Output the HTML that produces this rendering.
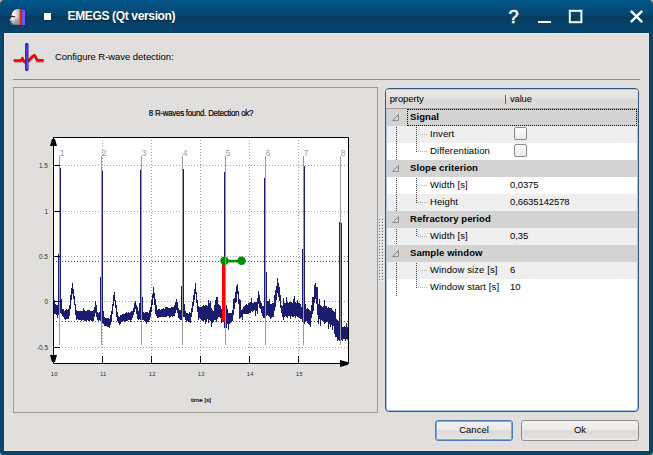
<!DOCTYPE html>
<html><head><meta charset="utf-8"><style>
*{margin:0;padding:0;box-sizing:border-box}
html,body{width:653px;height:455px;overflow:hidden;background:#aea89c;font-family:"Liberation Sans", sans-serif}
.abs{position:absolute}
#frame{position:absolute;left:0;top:0;width:653px;height:455px;background:#06466d;border-radius:5px 5px 4px 4px}
#title{position:absolute;left:0;top:0;width:653px;height:33px;border-radius:5px 5px 0 0;
 background:linear-gradient(to bottom,#02568a 0px,#034d7d 8px,#054670 15px,#053c5f 16.5px,#05406a 24px,#05446d 33px)}
#content{position:absolute;left:4px;top:33px;width:645px;height:418px;background:#e0dfde;border:1px solid #ebe7e3;box-shadow:0 0 0 1px #063d60}
.t{position:absolute;white-space:nowrap;font-family:"Liberation Sans", sans-serif;line-height:13px}
.btn{position:absolute;border-radius:3px;background:linear-gradient(to bottom,#f5f4f3 0%,#ebeae9 45%,#dcdbda 55%,#e4e3e2 90%,#f2f1f0 100%);font-size:9.5px;text-align:center;line-height:19px;color:#000}
</style></head><body>
<div id="frame"></div>
<div id="title"></div>
<div id="content"></div>
<div class="t" style="left:67.5px;top:10px;font-size:12px;font-weight:bold;color:#fff;letter-spacing:-0.35px;text-shadow:0 1px 1px #02243a">EMEGS (Qt version)</div>
<div class="t" style="left:55px;top:50px;font-size:9.5px;color:#000;letter-spacing:-0.05px">Configure R-wave detection:</div>
<div class="abs" style="left:13px;top:79px;width:627px;height:1px;background:#8c8b8a"></div>
<div class="abs" style="left:13px;top:87px;width:365px;height:326px;border:1px solid #9c9b9a"></div>
<div class="abs" style="left:385px;top:88px;width:254px;height:324px;border:1px solid #35577f;border-radius:4px;background:#fff;box-shadow:inset 1px 1px 0 #aac4e6, inset -1px -1px 0 #aac4e6"></div>
<div class="abs" style="left:386px;top:90px;width:252px;height:19px;background:linear-gradient(to bottom,#e9e8e7 0px,#e4e3e2 8px,#d9d8d7 9.5px,#dcdbda 17px,#e2e1e0 18px);border-bottom:1px solid #9e9d9c"></div>
<div class="t" style="left:389.7px;top:92px;font-size:9.5px;color:#000;letter-spacing:-0.1px">property</div>
<div class="abs" style="left:505px;top:95px;width:1px;height:9px;background:#606060"></div>
<div class="t" style="left:510px;top:92px;font-size:9.5px;color:#000;letter-spacing:-0.2px">value</div>
<div class="abs" style="left:387px;top:109px;width:250px;height:17px;background:#d3d3d3"></div>
<div class="t" style="left:410px;top:109.5px;font-size:9.5px;font-weight:bold;color:#000;letter-spacing:0.1px">Signal</div>
<div class="abs" style="left:387px;top:126px;width:250px;height:17px;background:#efefef"></div>
<div class="t" style="left:430px;top:126.5px;font-size:9.5px;color:#000;letter-spacing:0.1px">Invert</div>
<div class="abs" style="left:514px;top:127px;width:13px;height:13px;border:1px solid #8a8a8a;border-radius:2px;background:linear-gradient(#fdfdfd,#eaeaea)"></div>
<div class="abs" style="left:387px;top:143px;width:250px;height:17px;background:#ffffff"></div>
<div class="t" style="left:430px;top:143.5px;font-size:9.5px;color:#000;letter-spacing:0.1px">Differentiation</div>
<div class="abs" style="left:514px;top:144px;width:13px;height:13px;border:1px solid #8a8a8a;border-radius:2px;background:linear-gradient(#fdfdfd,#eaeaea)"></div>
<div class="abs" style="left:387px;top:160px;width:250px;height:17px;background:#d3d3d3"></div>
<div class="t" style="left:410px;top:160.5px;font-size:9.5px;font-weight:bold;color:#000;letter-spacing:0.1px">Slope criterion</div>
<div class="abs" style="left:387px;top:177px;width:250px;height:17px;background:#ffffff"></div>
<div class="t" style="left:430px;top:177.5px;font-size:9.5px;color:#000;letter-spacing:0.1px">Width [s]</div>
<div class="t" style="left:510px;top:177.5px;font-size:9.5px;color:#000;letter-spacing:-0.1px">0,0375</div>
<div class="abs" style="left:387px;top:194px;width:250px;height:17px;background:#efefef"></div>
<div class="t" style="left:430px;top:194.5px;font-size:9.5px;color:#000;letter-spacing:0.1px">Height</div>
<div class="t" style="left:510px;top:194.5px;font-size:9.5px;color:#000;letter-spacing:-0.1px">0,6635142578</div>
<div class="abs" style="left:387px;top:211px;width:250px;height:17px;background:#d3d3d3"></div>
<div class="t" style="left:410px;top:211.5px;font-size:9.5px;font-weight:bold;color:#000;letter-spacing:0.1px">Refractory period</div>
<div class="abs" style="left:387px;top:228px;width:250px;height:17px;background:#efefef"></div>
<div class="t" style="left:430px;top:228.5px;font-size:9.5px;color:#000;letter-spacing:0.1px">Width [s]</div>
<div class="t" style="left:510px;top:228.5px;font-size:9.5px;color:#000;letter-spacing:-0.1px">0,35</div>
<div class="abs" style="left:387px;top:245px;width:250px;height:17px;background:#d3d3d3"></div>
<div class="t" style="left:410px;top:245.5px;font-size:9.5px;font-weight:bold;color:#000;letter-spacing:0.1px">Sample window</div>
<div class="abs" style="left:387px;top:262px;width:250px;height:17px;background:#efefef"></div>
<div class="t" style="left:430px;top:262.5px;font-size:9.5px;color:#000;letter-spacing:0.1px">Window size [s]</div>
<div class="t" style="left:510px;top:262.5px;font-size:9.5px;color:#000;letter-spacing:-0.1px">6</div>
<div class="abs" style="left:387px;top:279px;width:250px;height:17px;background:#ffffff"></div>
<div class="t" style="left:430px;top:279.5px;font-size:9.5px;color:#000;letter-spacing:0.1px">Window start [s]</div>
<div class="t" style="left:510px;top:279.5px;font-size:9.5px;color:#000;letter-spacing:-0.1px">10</div>
<div class="btn" style="left:435px;top:420px;width:78px;height:21px;border:1px solid #4f7cb6;box-shadow:inset 0 0 0 1px #7ea8dc;line-height:17.5px">Cancel</div>
<div class="btn" style="left:521px;top:420px;width:118px;height:21px;border:1px solid #8e8d8c;line-height:17px">Ok</div>
<svg class="abs" style="left:0;top:0" width="653" height="455" viewBox="0 0 653 455">
<rect x="53" y="137" width="296" height="227" fill="#fff"/>
<path d="M62 165.5h1M65 165.5h1M68 165.5h1M71 165.5h1M74 165.5h1M77 165.5h1M80 165.5h1M83 165.5h1M86 165.5h1M89 165.5h1M92 165.5h1M95 165.5h1M98 165.5h1M101 165.5h1M104 165.5h1M107 165.5h1M110 165.5h1M113 165.5h1M116 165.5h1M119 165.5h1M122 165.5h1M125 165.5h1M128 165.5h1M131 165.5h1M134 165.5h1M137 165.5h1M140 165.5h1M143 165.5h1M146 165.5h1M149 165.5h1M152 165.5h1M155 165.5h1M158 165.5h1M161 165.5h1M164 165.5h1M167 165.5h1M170 165.5h1M173 165.5h1M176 165.5h1M179 165.5h1M182 165.5h1M185 165.5h1M188 165.5h1M191 165.5h1M194 165.5h1M197 165.5h1M200 165.5h1M203 165.5h1M206 165.5h1M209 165.5h1M212 165.5h1M215 165.5h1M218 165.5h1M221 165.5h1M224 165.5h1M227 165.5h1M230 165.5h1M233 165.5h1M236 165.5h1M239 165.5h1M242 165.5h1M245 165.5h1M248 165.5h1M251 165.5h1M254 165.5h1M257 165.5h1M260 165.5h1M263 165.5h1M266 165.5h1M269 165.5h1M272 165.5h1M275 165.5h1M278 165.5h1M281 165.5h1M284 165.5h1M287 165.5h1M290 165.5h1M293 165.5h1M296 165.5h1M299 165.5h1M302 165.5h1M305 165.5h1M308 165.5h1M311 165.5h1M314 165.5h1M317 165.5h1M320 165.5h1M323 165.5h1M326 165.5h1M329 165.5h1M332 165.5h1M335 165.5h1M338 165.5h1M341 165.5h1M344 165.5h1M347 165.5h1M62 211.5h1M65 211.5h1M68 211.5h1M71 211.5h1M74 211.5h1M77 211.5h1M80 211.5h1M83 211.5h1M86 211.5h1M89 211.5h1M92 211.5h1M95 211.5h1M98 211.5h1M101 211.5h1M104 211.5h1M107 211.5h1M110 211.5h1M113 211.5h1M116 211.5h1M119 211.5h1M122 211.5h1M125 211.5h1M128 211.5h1M131 211.5h1M134 211.5h1M137 211.5h1M140 211.5h1M143 211.5h1M146 211.5h1M149 211.5h1M152 211.5h1M155 211.5h1M158 211.5h1M161 211.5h1M164 211.5h1M167 211.5h1M170 211.5h1M173 211.5h1M176 211.5h1M179 211.5h1M182 211.5h1M185 211.5h1M188 211.5h1M191 211.5h1M194 211.5h1M197 211.5h1M200 211.5h1M203 211.5h1M206 211.5h1M209 211.5h1M212 211.5h1M215 211.5h1M218 211.5h1M221 211.5h1M224 211.5h1M227 211.5h1M230 211.5h1M233 211.5h1M236 211.5h1M239 211.5h1M242 211.5h1M245 211.5h1M248 211.5h1M251 211.5h1M254 211.5h1M257 211.5h1M260 211.5h1M263 211.5h1M266 211.5h1M269 211.5h1M272 211.5h1M275 211.5h1M278 211.5h1M281 211.5h1M284 211.5h1M287 211.5h1M290 211.5h1M293 211.5h1M296 211.5h1M299 211.5h1M302 211.5h1M305 211.5h1M308 211.5h1M311 211.5h1M314 211.5h1M317 211.5h1M320 211.5h1M323 211.5h1M326 211.5h1M329 211.5h1M332 211.5h1M335 211.5h1M338 211.5h1M341 211.5h1M344 211.5h1M347 211.5h1M62 256.5h1M65 256.5h1M68 256.5h1M71 256.5h1M74 256.5h1M77 256.5h1M80 256.5h1M83 256.5h1M86 256.5h1M89 256.5h1M92 256.5h1M95 256.5h1M98 256.5h1M101 256.5h1M104 256.5h1M107 256.5h1M110 256.5h1M113 256.5h1M116 256.5h1M119 256.5h1M122 256.5h1M125 256.5h1M128 256.5h1M131 256.5h1M134 256.5h1M137 256.5h1M140 256.5h1M143 256.5h1M146 256.5h1M149 256.5h1M152 256.5h1M155 256.5h1M158 256.5h1M161 256.5h1M164 256.5h1M167 256.5h1M170 256.5h1M173 256.5h1M176 256.5h1M179 256.5h1M182 256.5h1M185 256.5h1M188 256.5h1M191 256.5h1M194 256.5h1M197 256.5h1M200 256.5h1M203 256.5h1M206 256.5h1M209 256.5h1M212 256.5h1M215 256.5h1M218 256.5h1M221 256.5h1M224 256.5h1M227 256.5h1M230 256.5h1M233 256.5h1M236 256.5h1M239 256.5h1M242 256.5h1M245 256.5h1M248 256.5h1M251 256.5h1M254 256.5h1M257 256.5h1M260 256.5h1M263 256.5h1M266 256.5h1M269 256.5h1M272 256.5h1M275 256.5h1M278 256.5h1M281 256.5h1M284 256.5h1M287 256.5h1M290 256.5h1M293 256.5h1M296 256.5h1M299 256.5h1M302 256.5h1M305 256.5h1M308 256.5h1M311 256.5h1M314 256.5h1M317 256.5h1M320 256.5h1M323 256.5h1M326 256.5h1M329 256.5h1M332 256.5h1M335 256.5h1M338 256.5h1M341 256.5h1M344 256.5h1M347 256.5h1M62 301.5h1M65 301.5h1M68 301.5h1M71 301.5h1M74 301.5h1M77 301.5h1M80 301.5h1M83 301.5h1M86 301.5h1M89 301.5h1M92 301.5h1M95 301.5h1M98 301.5h1M101 301.5h1M104 301.5h1M107 301.5h1M110 301.5h1M113 301.5h1M116 301.5h1M119 301.5h1M122 301.5h1M125 301.5h1M128 301.5h1M131 301.5h1M134 301.5h1M137 301.5h1M140 301.5h1M143 301.5h1M146 301.5h1M149 301.5h1M152 301.5h1M155 301.5h1M158 301.5h1M161 301.5h1M164 301.5h1M167 301.5h1M170 301.5h1M173 301.5h1M176 301.5h1M179 301.5h1M182 301.5h1M185 301.5h1M188 301.5h1M191 301.5h1M194 301.5h1M197 301.5h1M200 301.5h1M203 301.5h1M206 301.5h1M209 301.5h1M212 301.5h1M215 301.5h1M218 301.5h1M221 301.5h1M224 301.5h1M227 301.5h1M230 301.5h1M233 301.5h1M236 301.5h1M239 301.5h1M242 301.5h1M245 301.5h1M248 301.5h1M251 301.5h1M254 301.5h1M257 301.5h1M260 301.5h1M263 301.5h1M266 301.5h1M269 301.5h1M272 301.5h1M275 301.5h1M278 301.5h1M281 301.5h1M284 301.5h1M287 301.5h1M290 301.5h1M293 301.5h1M296 301.5h1M299 301.5h1M302 301.5h1M305 301.5h1M308 301.5h1M311 301.5h1M314 301.5h1M317 301.5h1M320 301.5h1M323 301.5h1M326 301.5h1M329 301.5h1M332 301.5h1M335 301.5h1M338 301.5h1M341 301.5h1M344 301.5h1M347 301.5h1M62 347.5h1M65 347.5h1M68 347.5h1M71 347.5h1M74 347.5h1M77 347.5h1M80 347.5h1M83 347.5h1M86 347.5h1M89 347.5h1M92 347.5h1M95 347.5h1M98 347.5h1M101 347.5h1M104 347.5h1M107 347.5h1M110 347.5h1M113 347.5h1M116 347.5h1M119 347.5h1M122 347.5h1M125 347.5h1M128 347.5h1M131 347.5h1M134 347.5h1M137 347.5h1M140 347.5h1M143 347.5h1M146 347.5h1M149 347.5h1M152 347.5h1M155 347.5h1M158 347.5h1M161 347.5h1M164 347.5h1M167 347.5h1M170 347.5h1M173 347.5h1M176 347.5h1M179 347.5h1M182 347.5h1M185 347.5h1M188 347.5h1M191 347.5h1M194 347.5h1M197 347.5h1M200 347.5h1M203 347.5h1M206 347.5h1M209 347.5h1M212 347.5h1M215 347.5h1M218 347.5h1M221 347.5h1M224 347.5h1M227 347.5h1M230 347.5h1M233 347.5h1M236 347.5h1M239 347.5h1M242 347.5h1M245 347.5h1M248 347.5h1M251 347.5h1M254 347.5h1M257 347.5h1M260 347.5h1M263 347.5h1M266 347.5h1M269 347.5h1M272 347.5h1M275 347.5h1M278 347.5h1M281 347.5h1M284 347.5h1M287 347.5h1M290 347.5h1M293 347.5h1M296 347.5h1M299 347.5h1M302 347.5h1M305 347.5h1M308 347.5h1M311 347.5h1M314 347.5h1M317 347.5h1M320 347.5h1M323 347.5h1M326 347.5h1M329 347.5h1M332 347.5h1M335 347.5h1M338 347.5h1M341 347.5h1M344 347.5h1M347 347.5h1M102.5 140v1M102.5 143v1M102.5 146v1M102.5 149v1M102.5 152v1M102.5 155v1M102.5 158v1M102.5 161v1M102.5 164v1M102.5 167v1M102.5 170v1M102.5 173v1M102.5 176v1M102.5 179v1M102.5 182v1M102.5 185v1M102.5 188v1M102.5 191v1M102.5 194v1M102.5 197v1M102.5 200v1M102.5 203v1M102.5 206v1M102.5 209v1M102.5 212v1M102.5 215v1M102.5 218v1M102.5 221v1M102.5 224v1M102.5 227v1M102.5 230v1M102.5 233v1M102.5 236v1M102.5 239v1M102.5 242v1M102.5 245v1M102.5 248v1M102.5 251v1M102.5 254v1M102.5 257v1M102.5 260v1M102.5 263v1M102.5 266v1M102.5 269v1M102.5 272v1M102.5 275v1M102.5 278v1M102.5 281v1M102.5 284v1M102.5 287v1M102.5 290v1M102.5 293v1M102.5 296v1M102.5 299v1M102.5 302v1M102.5 305v1M102.5 308v1M102.5 311v1M102.5 314v1M102.5 317v1M102.5 320v1M102.5 323v1M102.5 326v1M102.5 329v1M102.5 332v1M102.5 335v1M102.5 338v1M102.5 341v1M102.5 344v1M102.5 347v1M102.5 350v1M102.5 353v1M151.5 140v1M151.5 143v1M151.5 146v1M151.5 149v1M151.5 152v1M151.5 155v1M151.5 158v1M151.5 161v1M151.5 164v1M151.5 167v1M151.5 170v1M151.5 173v1M151.5 176v1M151.5 179v1M151.5 182v1M151.5 185v1M151.5 188v1M151.5 191v1M151.5 194v1M151.5 197v1M151.5 200v1M151.5 203v1M151.5 206v1M151.5 209v1M151.5 212v1M151.5 215v1M151.5 218v1M151.5 221v1M151.5 224v1M151.5 227v1M151.5 230v1M151.5 233v1M151.5 236v1M151.5 239v1M151.5 242v1M151.5 245v1M151.5 248v1M151.5 251v1M151.5 254v1M151.5 257v1M151.5 260v1M151.5 263v1M151.5 266v1M151.5 269v1M151.5 272v1M151.5 275v1M151.5 278v1M151.5 281v1M151.5 284v1M151.5 287v1M151.5 290v1M151.5 293v1M151.5 296v1M151.5 299v1M151.5 302v1M151.5 305v1M151.5 308v1M151.5 311v1M151.5 314v1M151.5 317v1M151.5 320v1M151.5 323v1M151.5 326v1M151.5 329v1M151.5 332v1M151.5 335v1M151.5 338v1M151.5 341v1M151.5 344v1M151.5 347v1M151.5 350v1M151.5 353v1M200.5 140v1M200.5 143v1M200.5 146v1M200.5 149v1M200.5 152v1M200.5 155v1M200.5 158v1M200.5 161v1M200.5 164v1M200.5 167v1M200.5 170v1M200.5 173v1M200.5 176v1M200.5 179v1M200.5 182v1M200.5 185v1M200.5 188v1M200.5 191v1M200.5 194v1M200.5 197v1M200.5 200v1M200.5 203v1M200.5 206v1M200.5 209v1M200.5 212v1M200.5 215v1M200.5 218v1M200.5 221v1M200.5 224v1M200.5 227v1M200.5 230v1M200.5 233v1M200.5 236v1M200.5 239v1M200.5 242v1M200.5 245v1M200.5 248v1M200.5 251v1M200.5 254v1M200.5 257v1M200.5 260v1M200.5 263v1M200.5 266v1M200.5 269v1M200.5 272v1M200.5 275v1M200.5 278v1M200.5 281v1M200.5 284v1M200.5 287v1M200.5 290v1M200.5 293v1M200.5 296v1M200.5 299v1M200.5 302v1M200.5 305v1M200.5 308v1M200.5 311v1M200.5 314v1M200.5 317v1M200.5 320v1M200.5 323v1M200.5 326v1M200.5 329v1M200.5 332v1M200.5 335v1M200.5 338v1M200.5 341v1M200.5 344v1M200.5 347v1M200.5 350v1M200.5 353v1M249.5 140v1M249.5 143v1M249.5 146v1M249.5 149v1M249.5 152v1M249.5 155v1M249.5 158v1M249.5 161v1M249.5 164v1M249.5 167v1M249.5 170v1M249.5 173v1M249.5 176v1M249.5 179v1M249.5 182v1M249.5 185v1M249.5 188v1M249.5 191v1M249.5 194v1M249.5 197v1M249.5 200v1M249.5 203v1M249.5 206v1M249.5 209v1M249.5 212v1M249.5 215v1M249.5 218v1M249.5 221v1M249.5 224v1M249.5 227v1M249.5 230v1M249.5 233v1M249.5 236v1M249.5 239v1M249.5 242v1M249.5 245v1M249.5 248v1M249.5 251v1M249.5 254v1M249.5 257v1M249.5 260v1M249.5 263v1M249.5 266v1M249.5 269v1M249.5 272v1M249.5 275v1M249.5 278v1M249.5 281v1M249.5 284v1M249.5 287v1M249.5 290v1M249.5 293v1M249.5 296v1M249.5 299v1M249.5 302v1M249.5 305v1M249.5 308v1M249.5 311v1M249.5 314v1M249.5 317v1M249.5 320v1M249.5 323v1M249.5 326v1M249.5 329v1M249.5 332v1M249.5 335v1M249.5 338v1M249.5 341v1M249.5 344v1M249.5 347v1M249.5 350v1M249.5 353v1M298.5 140v1M298.5 143v1M298.5 146v1M298.5 149v1M298.5 152v1M298.5 155v1M298.5 158v1M298.5 161v1M298.5 164v1M298.5 167v1M298.5 170v1M298.5 173v1M298.5 176v1M298.5 179v1M298.5 182v1M298.5 185v1M298.5 188v1M298.5 191v1M298.5 194v1M298.5 197v1M298.5 200v1M298.5 203v1M298.5 206v1M298.5 209v1M298.5 212v1M298.5 215v1M298.5 218v1M298.5 221v1M298.5 224v1M298.5 227v1M298.5 230v1M298.5 233v1M298.5 236v1M298.5 239v1M298.5 242v1M298.5 245v1M298.5 248v1M298.5 251v1M298.5 254v1M298.5 257v1M298.5 260v1M298.5 263v1M298.5 266v1M298.5 269v1M298.5 272v1M298.5 275v1M298.5 278v1M298.5 281v1M298.5 284v1M298.5 287v1M298.5 290v1M298.5 293v1M298.5 296v1M298.5 299v1M298.5 302v1M298.5 305v1M298.5 308v1M298.5 311v1M298.5 314v1M298.5 317v1M298.5 320v1M298.5 323v1M298.5 326v1M298.5 329v1M298.5 332v1M298.5 335v1M298.5 338v1M298.5 341v1M298.5 344v1M298.5 347v1M298.5 350v1M298.5 353v1" stroke="#a0a0a0" stroke-width="1" fill="none"/>
<path d="M53 261.5h1M56 261.5h1M59 261.5h1M62 261.5h1M65 261.5h1M68 261.5h1M71 261.5h1M74 261.5h1M77 261.5h1M80 261.5h1M83 261.5h1M86 261.5h1M89 261.5h1M92 261.5h1M95 261.5h1M98 261.5h1M101 261.5h1M104 261.5h1M107 261.5h1M110 261.5h1M113 261.5h1M116 261.5h1M119 261.5h1M122 261.5h1M125 261.5h1M128 261.5h1M131 261.5h1M134 261.5h1M137 261.5h1M140 261.5h1M143 261.5h1M146 261.5h1M149 261.5h1M152 261.5h1M155 261.5h1M158 261.5h1M161 261.5h1M164 261.5h1M167 261.5h1M170 261.5h1M173 261.5h1M176 261.5h1M179 261.5h1M182 261.5h1M185 261.5h1M188 261.5h1M191 261.5h1M194 261.5h1M197 261.5h1M200 261.5h1M203 261.5h1M206 261.5h1M209 261.5h1M212 261.5h1M215 261.5h1M218 261.5h1M221 261.5h1M224 261.5h1M227 261.5h1M230 261.5h1M233 261.5h1M236 261.5h1M239 261.5h1M242 261.5h1M245 261.5h1M248 261.5h1M251 261.5h1M254 261.5h1M257 261.5h1M260 261.5h1M263 261.5h1M266 261.5h1M269 261.5h1M272 261.5h1M275 261.5h1M278 261.5h1M281 261.5h1M284 261.5h1M287 261.5h1M290 261.5h1M293 261.5h1M296 261.5h1M299 261.5h1M302 261.5h1M305 261.5h1M308 261.5h1M311 261.5h1M314 261.5h1M317 261.5h1M320 261.5h1M323 261.5h1M326 261.5h1M329 261.5h1M332 261.5h1M335 261.5h1M338 261.5h1M341 261.5h1M344 261.5h1M347 261.5h1M53 321.5h1M56 321.5h1M59 321.5h1M62 321.5h1M65 321.5h1M68 321.5h1M71 321.5h1M74 321.5h1M77 321.5h1M80 321.5h1M83 321.5h1M86 321.5h1M89 321.5h1M92 321.5h1M95 321.5h1M98 321.5h1M101 321.5h1M104 321.5h1M107 321.5h1M110 321.5h1M113 321.5h1M116 321.5h1M119 321.5h1M122 321.5h1M125 321.5h1M128 321.5h1M131 321.5h1M134 321.5h1M137 321.5h1M140 321.5h1M143 321.5h1M146 321.5h1M149 321.5h1M152 321.5h1M155 321.5h1M158 321.5h1M161 321.5h1M164 321.5h1M167 321.5h1M170 321.5h1M173 321.5h1M176 321.5h1M179 321.5h1M182 321.5h1M185 321.5h1M188 321.5h1M191 321.5h1M194 321.5h1M197 321.5h1M200 321.5h1M203 321.5h1M206 321.5h1M209 321.5h1M212 321.5h1M215 321.5h1M218 321.5h1M221 321.5h1M224 321.5h1M227 321.5h1M230 321.5h1M233 321.5h1M236 321.5h1M239 321.5h1M242 321.5h1M245 321.5h1M248 321.5h1M251 321.5h1M254 321.5h1M257 321.5h1M260 321.5h1M263 321.5h1M266 321.5h1M269 321.5h1M272 321.5h1M275 321.5h1M278 321.5h1M281 321.5h1M284 321.5h1M287 321.5h1M290 321.5h1M293 321.5h1M296 321.5h1M299 321.5h1M302 321.5h1M305 321.5h1M308 321.5h1M311 321.5h1M314 321.5h1M317 321.5h1M320 321.5h1M323 321.5h1M326 321.5h1M329 321.5h1M332 321.5h1M335 321.5h1M338 321.5h1M341 321.5h1M344 321.5h1M347 321.5h1" stroke="#ff0000" stroke-width="1" fill="none"/>
<path d="M53 297h1V314h-1ZM54 300h1V314h-1ZM55 304h1V314h-1ZM56 305h1V315h-1ZM57 305h1V318h-1ZM58 300h1V315h-1ZM59 299h1V313h-1ZM60 298h1V313h-1ZM61 299h1V314h-1ZM62 309h1V316h-1ZM63 309h1V317h-1ZM64 311h1V319h-1ZM65 310h1V320h-1ZM66 309h1V319h-1ZM67 310h1V319h-1ZM68 309h1V319h-1ZM69 305h1V316h-1ZM70 295h1V309h-1ZM71 288h1V300h-1ZM72 283h1V294h-1ZM73 289h1V299h-1ZM74 296h1V305h-1ZM75 304h1V315h-1ZM76 310h1V320h-1ZM77 311h1V319h-1ZM78 311h1V320h-1ZM79 311h1V320h-1ZM80 311h1V320h-1ZM81 311h1V321h-1ZM82 311h1V320h-1ZM83 308h1V320h-1ZM84 310h1V321h-1ZM85 311h1V321h-1ZM86 311h1V321h-1ZM87 310h1V320h-1ZM88 310h1V321h-1ZM89 310h1V321h-1ZM90 311h1V320h-1ZM91 311h1V321h-1ZM92 311h1V321h-1ZM93 310h1V321h-1ZM94 307h1V317h-1ZM95 301h1V313h-1ZM96 305h1V317h-1ZM97 312h1V320h-1ZM98 313h1V321h-1ZM99 312h1V320h-1ZM100 311h1V321h-1ZM101 310h1V322h-1ZM102 308h1V323h-1ZM103 311h1V324h-1ZM104 317h1V326h-1ZM105 318h1V326h-1ZM106 318h1V326h-1ZM107 318h1V327h-1ZM108 318h1V327h-1ZM109 319h1V328h-1ZM110 315h1V325h-1ZM111 311h1V322h-1ZM112 304h1V314h-1ZM113 295h1V306h-1ZM114 292h1V301h-1ZM115 300h1V308h-1ZM116 305h1V317h-1ZM117 312h1V321h-1ZM118 316h1V323h-1ZM119 317h1V325h-1ZM120 315h1V324h-1ZM121 315h1V322h-1ZM122 314h1V321h-1ZM123 314h1V321h-1ZM124 314h1V322h-1ZM125 313h1V321h-1ZM126 312h1V321h-1ZM127 313h1V321h-1ZM128 312h1V320h-1ZM129 313h1V320h-1ZM130 312h1V322h-1ZM131 311h1V320h-1ZM132 311h1V318h-1ZM133 308h1V315h-1ZM134 303h1V312h-1ZM135 301h1V309h-1ZM136 305h1V314h-1ZM137 307h1V319h-1ZM138 311h1V320h-1ZM139 312h1V319h-1ZM140 312h1V320h-1ZM141 313h1V320h-1ZM142 312h1V320h-1ZM143 312h1V320h-1ZM144 313h1V321h-1ZM145 312h1V322h-1ZM146 312h1V324h-1ZM147 312h1V322h-1ZM148 313h1V322h-1ZM149 310h1V320h-1ZM150 307h1V317h-1ZM151 300h1V312h-1ZM152 294h1V305h-1ZM153 287h1V298h-1ZM154 293h1V305h-1ZM155 299h1V314h-1ZM156 305h1V316h-1ZM157 310h1V318h-1ZM158 309h1V318h-1ZM159 309h1V317h-1ZM160 310h1V317h-1ZM161 309h1V317h-1ZM162 309h1V317h-1ZM163 308h1V317h-1ZM164 309h1V317h-1ZM165 307h1V317h-1ZM166 307h1V317h-1ZM167 307h1V316h-1ZM168 308h1V316h-1ZM169 308h1V318h-1ZM170 308h1V317h-1ZM171 307h1V316h-1ZM172 307h1V317h-1ZM173 307h1V316h-1ZM174 305h1V316h-1ZM175 302h1V313h-1ZM176 299h1V310h-1ZM177 302h1V313h-1ZM178 308h1V318h-1ZM179 310h1V319h-1ZM180 310h1V320h-1ZM181 309h1V320h-1ZM182 306h1V317h-1ZM183 304h1V317h-1ZM184 304h1V317h-1ZM185 311h1V320h-1ZM186 313h1V322h-1ZM187 313h1V321h-1ZM188 314h1V322h-1ZM189 312h1V322h-1ZM190 313h1V323h-1ZM191 308h1V317h-1ZM192 302h1V312h-1ZM193 295h1V306h-1ZM194 289h1V300h-1ZM195 283h1V294h-1ZM196 292h1V303h-1ZM197 300h1V312h-1ZM198 306h1V320h-1ZM199 307h1V318h-1ZM200 307h1V319h-1ZM201 307h1V320h-1ZM202 306h1V321h-1ZM203 305h1V321h-1ZM204 306h1V320h-1ZM205 305h1V324h-1ZM206 305h1V322h-1ZM207 306h1V319h-1ZM208 300h1V323h-1ZM209 303h1V320h-1ZM210 301h1V321h-1ZM211 308h1V327h-1ZM212 310h1V323h-1ZM213 311h1V322h-1ZM214 305h1V320h-1ZM215 300h1V320h-1ZM216 297h1V322h-1ZM217 297h1V319h-1ZM218 304h1V317h-1ZM219 305h1V317h-1ZM220 306h1V318h-1ZM221 309h1V323h-1ZM222 309h1V321h-1ZM223 310h1V320h-1ZM224 309h1V328h-1ZM225 304h1V322h-1ZM226 305h1V328h-1ZM227 309h1V324h-1ZM228 313h1V330h-1ZM229 313h1V324h-1ZM230 313h1V323h-1ZM231 313h1V322h-1ZM232 310h1V321h-1ZM233 299h1V315h-1ZM234 298h1V309h-1ZM235 292h1V303h-1ZM236 286h1V302h-1ZM237 284h1V294h-1ZM238 291h1V304h-1ZM239 299h1V319h-1ZM240 300h1V318h-1ZM241 310h1V317h-1ZM242 309h1V320h-1ZM243 307h1V314h-1ZM244 306h1V314h-1ZM245 305h1V314h-1ZM246 304h1V314h-1ZM247 305h1V314h-1ZM248 303h1V314h-1ZM249 303h1V313h-1ZM250 302h1V313h-1ZM251 298h1V311h-1ZM252 303h1V312h-1ZM253 303h1V311h-1ZM254 302h1V310h-1ZM255 302h1V316h-1ZM256 302h1V311h-1ZM257 298h1V314h-1ZM258 291h1V304h-1ZM259 295h1V308h-1ZM260 301h1V309h-1ZM261 303h1V313h-1ZM262 306h1V316h-1ZM263 306h1V318h-1ZM264 306h1V318h-1ZM265 304h1V317h-1ZM266 303h1V316h-1ZM267 301h1V315h-1ZM268 301h1V316h-1ZM269 299h1V317h-1ZM270 304h1V319h-1ZM271 304h1V318h-1ZM272 303h1V317h-1ZM273 303h1V317h-1ZM274 295h1V311h-1ZM275 290h1V307h-1ZM276 286h1V300h-1ZM277 278h1V293h-1ZM278 283h1V297h-1ZM279 287h1V301h-1ZM280 295h1V308h-1ZM281 305h1V313h-1ZM282 306h1V317h-1ZM283 298h1V320h-1ZM284 303h1V317h-1ZM285 303h1V316h-1ZM286 297h1V317h-1ZM287 302h1V318h-1ZM288 303h1V316h-1ZM289 302h1V316h-1ZM290 302h1V319h-1ZM291 302h1V316h-1ZM292 303h1V317h-1ZM293 299h1V317h-1ZM294 296h1V316h-1ZM295 302h1V318h-1ZM296 303h1V316h-1ZM297 300h1V317h-1ZM298 303h1V317h-1ZM299 303h1V318h-1ZM300 304h1V319h-1ZM301 307h1V319h-1ZM302 308h1V322h-1ZM303 307h1V320h-1ZM304 307h1V324h-1ZM305 304h1V322h-1ZM306 309h1V321h-1ZM307 308h1V323h-1ZM308 309h1V324h-1ZM309 310h1V325h-1ZM310 311h1V327h-1ZM311 305h1V318h-1ZM312 297h1V314h-1ZM313 297h1V311h-1ZM314 285h1V303h-1ZM315 283h1V299h-1ZM316 287h1V304h-1ZM317 287h1V315h-1ZM318 304h1V324h-1ZM319 299h1V319h-1ZM320 305h1V326h-1ZM321 306h1V320h-1ZM322 307h1V321h-1ZM323 306h1V321h-1ZM324 300h1V324h-1ZM325 306h1V323h-1ZM326 306h1V322h-1ZM327 308h1V322h-1ZM328 307h1V329h-1ZM329 308h1V324h-1ZM330 308h1V327h-1ZM331 308h1V325h-1ZM332 310h1V330h-1ZM333 311h1V326h-1ZM334 312h1V334h-1ZM335 309h1V337h-1ZM336 319h1V337h-1ZM337 320h1V341h-1ZM338 321h1V340h-1ZM339 320h1V341h-1ZM340 323h1V340h-1ZM341 320h1V340h-1ZM342 327h1V341h-1ZM343 327h1V339h-1ZM344 326h1V339h-1ZM345 327h1V341h-1ZM346 323h1V339h-1ZM347 327h1V340h-1Z" fill="#1b1b6f" shape-rendering="crispEdges"/>
<path d="" stroke="#1b1b6f" stroke-width="1" fill="none"/>
<path d="M60.5 168V312" stroke="#1b1b6f" stroke-width="1" shape-rendering="crispEdges"/><path d="M102.5 171V318" stroke="#1b1b6f" stroke-width="1" shape-rendering="crispEdges"/><path d="M140.5 170V318" stroke="#1b1b6f" stroke-width="1" shape-rendering="crispEdges"/><path d="M183.5 169V316" stroke="#1b1b6f" stroke-width="1" shape-rendering="crispEdges"/><path d="M224.5 172V318" stroke="#1b1b6f" stroke-width="1" shape-rendering="crispEdges"/><path d="M264.5 178V316" stroke="#1b1b6f" stroke-width="1" shape-rendering="crispEdges"/><path d="M304.5 166V318" stroke="#1b1b6f" stroke-width="1" shape-rendering="crispEdges"/><path d="M339.5 222V334" stroke="#1b1b6f" stroke-width="1" shape-rendering="crispEdges"/><path d="M341.5 223V336" stroke="#1b1b6f" stroke-width="1" shape-rendering="crispEdges"/>
<path d="M58.5 254V300M100.5 277V315M139.5 303V315M142.5 297V315M181.5 286V315M266.5 272V312M302.5 249V312" stroke="#1b1b6f" stroke-width="1" fill="none" shape-rendering="crispEdges"/>
<text x="59.7" y="156" font-size="8.5" fill="#9a9a9a" font-family='"Liberation Sans", sans-serif'>1</text>
<text x="101.7" y="156" font-size="8.5" fill="#9a9a9a" font-family='"Liberation Sans", sans-serif'>2</text>
<text x="141.7" y="156" font-size="8.5" fill="#9a9a9a" font-family='"Liberation Sans", sans-serif'>3</text>
<text x="182.7" y="156" font-size="8.5" fill="#9a9a9a" font-family='"Liberation Sans", sans-serif'>4</text>
<text x="225.7" y="156" font-size="8.5" fill="#9a9a9a" font-family='"Liberation Sans", sans-serif'>5</text>
<text x="265.7" y="156" font-size="8.5" fill="#9a9a9a" font-family='"Liberation Sans", sans-serif'>6</text>
<text x="303.7" y="156" font-size="8.5" fill="#9a9a9a" font-family='"Liberation Sans", sans-serif'>7</text>
<text x="340.7" y="156" font-size="8.5" fill="#9a9a9a" font-family='"Liberation Sans", sans-serif'>8</text>
<rect x="222" y="264" width="3" height="58" fill="#ff0000"/>
<rect x="224" y="259.8" width="17" height="2.6" fill="#008c00"/>
<circle cx="224.5" cy="260.8" r="4.2" fill="#008c00"/>
<circle cx="241.5" cy="260.8" r="4.2" fill="#008c00"/>
<path d="M59.5 156V345M101.5 156V345M141.5 156V345M182.5 156V345M225.5 156V345M265.5 156V345M303.5 156V345M340.5 156V345" stroke="#9a9a9a" stroke-width="1" fill="none"/>
<path d="M53.5 137V363.5H348.5V137.5H53" stroke="#000" stroke-width="1" fill="none"/>
<path d="M53 165.5H60M53 211.5H60M53 256.5H60M53 301.5H60M53 347.5H60M102.5 356V363M151.5 356V363M200.5 356V363M249.5 356V363M298.5 356V363" stroke="#000" stroke-width="1" fill="none"/>
<path d="M52 139H55L57 146H50Z" fill="#000"/>
<path d="M50 355H57L55 362H52Z" fill="#000"/>
<path d="M340 360L348 362.2V364.8L340 367Z" fill="#000"/>
<text x="48" y="168" font-size="6.5" text-anchor="end" fill="#333" font-family='"Liberation Sans", sans-serif'>1.5</text>
<text x="48" y="214" font-size="6.5" text-anchor="end" fill="#333" font-family='"Liberation Sans", sans-serif'>1</text>
<text x="48" y="259" font-size="6.5" text-anchor="end" fill="#333" font-family='"Liberation Sans", sans-serif'>0.5</text>
<text x="48" y="304" font-size="6.5" text-anchor="end" fill="#333" font-family='"Liberation Sans", sans-serif'>0</text>
<text x="48" y="350" font-size="6.5" text-anchor="end" fill="#333" font-family='"Liberation Sans", sans-serif'>-0.5</text>
<text x="54.2" y="376.2" font-size="6" text-anchor="middle" fill="#333" font-family='"Liberation Sans", sans-serif'>10</text>
<text x="103.2" y="376.2" font-size="6" text-anchor="middle" fill="#333" font-family='"Liberation Sans", sans-serif'>11</text>
<text x="152.2" y="376.2" font-size="6" text-anchor="middle" fill="#333" font-family='"Liberation Sans", sans-serif'>12</text>
<text x="201.2" y="376.2" font-size="6" text-anchor="middle" fill="#333" font-family='"Liberation Sans", sans-serif'>13</text>
<text x="250.2" y="376.2" font-size="6" text-anchor="middle" fill="#333" font-family='"Liberation Sans", sans-serif'>14</text>
<text x="299.2" y="376.2" font-size="6" text-anchor="middle" fill="#333" font-family='"Liberation Sans", sans-serif'>15</text>
<text x="201" y="402" font-size="6.2" text-anchor="middle" fill="#000" stroke="#000" stroke-width="0.15" font-family='"Liberation Sans", sans-serif'>time [s]</text>
<text transform="translate(148.8,115.8) scale(0.85,1)" x="0" y="0" font-size="9.3" fill="#000" font-family='"Liberation Sans", sans-serif' letter-spacing="-0.3" stroke="#000" stroke-width="0.2">8 R-waves found. Detection ok?</text>
<path d="M392.5 120.5L398.5 114.5V120.5Z" transform="translate(0,0)" stroke="#8c8c8c" stroke-width="1" fill="none"/>
<path d="M392.5 120.5L398.5 114.5V120.5Z" transform="translate(0,51)" stroke="#8c8c8c" stroke-width="1" fill="none"/>
<path d="M392.5 120.5L398.5 114.5V120.5Z" transform="translate(0,102)" stroke="#8c8c8c" stroke-width="1" fill="none"/>
<path d="M392.5 120.5L398.5 114.5V120.5Z" transform="translate(0,136)" stroke="#8c8c8c" stroke-width="1" fill="none"/>
<path d="M396.5 127v1M396.5 129v1M396.5 131v1M396.5 133v1M396.5 135v1M396.5 137v1M396.5 139v1M396.5 141v1M396.5 143v1M396.5 145v1M396.5 147v1M396.5 149v1M396.5 151v1M396.5 153v1M396.5 155v1M396.5 157v1M396.5 159v1M416.5 127v1M416.5 129v1M416.5 131v1M416.5 133v1M416.5 135v1M416.5 137v1M416.5 139v1M416.5 141v1M416.5 143v1M416.5 145v1M416.5 147v1M416.5 149v1M416.5 151v1M396.5 178v1M396.5 180v1M396.5 182v1M396.5 184v1M396.5 186v1M396.5 188v1M396.5 190v1M396.5 192v1M396.5 194v1M396.5 196v1M396.5 198v1M396.5 200v1M396.5 202v1M396.5 204v1M396.5 206v1M396.5 208v1M396.5 210v1M416.5 178v1M416.5 180v1M416.5 182v1M416.5 184v1M416.5 186v1M416.5 188v1M416.5 190v1M416.5 192v1M416.5 194v1M416.5 196v1M416.5 198v1M416.5 200v1M416.5 202v1M396.5 229v1M396.5 231v1M396.5 233v1M396.5 235v1M396.5 237v1M396.5 239v1M396.5 241v1M396.5 243v1M416.5 229v1M416.5 231v1M416.5 233v1M416.5 235v1M396.5 263v1M396.5 265v1M396.5 267v1M396.5 269v1M396.5 271v1M396.5 273v1M396.5 275v1M396.5 277v1M396.5 279v1M396.5 281v1M396.5 283v1M396.5 285v1M396.5 287v1M396.5 289v1M396.5 291v1M396.5 293v1M396.5 295v1M416.5 263v1M416.5 265v1M416.5 267v1M416.5 269v1M416.5 271v1M416.5 273v1M416.5 275v1M416.5 277v1M416.5 279v1M416.5 281v1M416.5 283v1M416.5 285v1M416.5 287v1" stroke="#404040" stroke-width="1" fill="none"/>
<path d="M418 134.5h1M420 134.5h1M422 134.5h1M424 134.5h1M426 134.5h1M418 151.5h1M420 151.5h1M422 151.5h1M424 151.5h1M426 151.5h1M418 185.5h1M420 185.5h1M422 185.5h1M424 185.5h1M426 185.5h1M418 202.5h1M420 202.5h1M422 202.5h1M424 202.5h1M426 202.5h1M418 236.5h1M420 236.5h1M422 236.5h1M424 236.5h1M426 236.5h1M418 270.5h1M420 270.5h1M422 270.5h1M424 270.5h1M426 270.5h1M418 287.5h1M420 287.5h1M422 287.5h1M424 287.5h1M426 287.5h1" stroke="#b4b4b4" stroke-width="1" fill="none"/>
<path d="M408 109.5h1M408 125.5h1M410 109.5h1M410 125.5h1M412 109.5h1M412 125.5h1M414 109.5h1M414 125.5h1M416 109.5h1M416 125.5h1M418 109.5h1M418 125.5h1M420 109.5h1M420 125.5h1M422 109.5h1M422 125.5h1M424 109.5h1M424 125.5h1M426 109.5h1M426 125.5h1M428 109.5h1M428 125.5h1M430 109.5h1M430 125.5h1M432 109.5h1M432 125.5h1M434 109.5h1M434 125.5h1M436 109.5h1M436 125.5h1M438 109.5h1M438 125.5h1M440 109.5h1M440 125.5h1M442 109.5h1M442 125.5h1M444 109.5h1M444 125.5h1M446 109.5h1M446 125.5h1M448 109.5h1M448 125.5h1M450 109.5h1M450 125.5h1M452 109.5h1M452 125.5h1M454 109.5h1M454 125.5h1M456 109.5h1M456 125.5h1M458 109.5h1M458 125.5h1M460 109.5h1M460 125.5h1M462 109.5h1M462 125.5h1M464 109.5h1M464 125.5h1M466 109.5h1M466 125.5h1M468 109.5h1M468 125.5h1M470 109.5h1M470 125.5h1M472 109.5h1M472 125.5h1M474 109.5h1M474 125.5h1M476 109.5h1M476 125.5h1M478 109.5h1M478 125.5h1M480 109.5h1M480 125.5h1M482 109.5h1M482 125.5h1M484 109.5h1M484 125.5h1M486 109.5h1M486 125.5h1M488 109.5h1M488 125.5h1M490 109.5h1M490 125.5h1M492 109.5h1M492 125.5h1M494 109.5h1M494 125.5h1M496 109.5h1M496 125.5h1M498 109.5h1M498 125.5h1M500 109.5h1M500 125.5h1M502 109.5h1M502 125.5h1M504 109.5h1M504 125.5h1M506 109.5h1M506 125.5h1M508 109.5h1M508 125.5h1M510 109.5h1M510 125.5h1M512 109.5h1M512 125.5h1M514 109.5h1M514 125.5h1M516 109.5h1M516 125.5h1M518 109.5h1M518 125.5h1M520 109.5h1M520 125.5h1M522 109.5h1M522 125.5h1M524 109.5h1M524 125.5h1M526 109.5h1M526 125.5h1M528 109.5h1M528 125.5h1M530 109.5h1M530 125.5h1M532 109.5h1M532 125.5h1M534 109.5h1M534 125.5h1M536 109.5h1M536 125.5h1M538 109.5h1M538 125.5h1M540 109.5h1M540 125.5h1M542 109.5h1M542 125.5h1M544 109.5h1M544 125.5h1M546 109.5h1M546 125.5h1M548 109.5h1M548 125.5h1M550 109.5h1M550 125.5h1M552 109.5h1M552 125.5h1M554 109.5h1M554 125.5h1M556 109.5h1M556 125.5h1M558 109.5h1M558 125.5h1M560 109.5h1M560 125.5h1M562 109.5h1M562 125.5h1M564 109.5h1M564 125.5h1M566 109.5h1M566 125.5h1M568 109.5h1M568 125.5h1M570 109.5h1M570 125.5h1M572 109.5h1M572 125.5h1M574 109.5h1M574 125.5h1M576 109.5h1M576 125.5h1M578 109.5h1M578 125.5h1M580 109.5h1M580 125.5h1M582 109.5h1M582 125.5h1M584 109.5h1M584 125.5h1M586 109.5h1M586 125.5h1M588 109.5h1M588 125.5h1M590 109.5h1M590 125.5h1M592 109.5h1M592 125.5h1M594 109.5h1M594 125.5h1M596 109.5h1M596 125.5h1M598 109.5h1M598 125.5h1M600 109.5h1M600 125.5h1M602 109.5h1M602 125.5h1M604 109.5h1M604 125.5h1M606 109.5h1M606 125.5h1M608 109.5h1M608 125.5h1M610 109.5h1M610 125.5h1M612 109.5h1M612 125.5h1M614 109.5h1M614 125.5h1M616 109.5h1M616 125.5h1M618 109.5h1M618 125.5h1M620 109.5h1M620 125.5h1M622 109.5h1M622 125.5h1M624 109.5h1M624 125.5h1M626 109.5h1M626 125.5h1M628 109.5h1M628 125.5h1M630 109.5h1M630 125.5h1M632 109.5h1M632 125.5h1M634 109.5h1M634 125.5h1M636 109.5h1M636 125.5h1M407.5 109v1M636.5 109v1M407.5 111v1M636.5 111v1M407.5 113v1M636.5 113v1M407.5 115v1M636.5 115v1M407.5 117v1M636.5 117v1M407.5 119v1M636.5 119v1M407.5 121v1M636.5 121v1M407.5 123v1M636.5 123v1M407.5 125v1M636.5 125v1" stroke="#000" stroke-width="1" fill="none"/>
<path d="M379 219.5h1M382 219.5h1M379 222.5h1M382 222.5h1M379 225.5h1M382 225.5h1M379 228.5h1M382 228.5h1M379 231.5h1M382 231.5h1M379 234.5h1M382 234.5h1M379 237.5h1M382 237.5h1M379 240.5h1M382 240.5h1M379 243.5h1M382 243.5h1M379 246.5h1M382 246.5h1M379 249.5h1M382 249.5h1M379 252.5h1M382 252.5h1M379 255.5h1M382 255.5h1M379 258.5h1M382 258.5h1M379 261.5h1M382 261.5h1M379 264.5h1M382 264.5h1M379 267.5h1M382 267.5h1M379 270.5h1M382 270.5h1M379 273.5h1M382 273.5h1M379 276.5h1M382 276.5h1M379 279.5h1M382 279.5h1" stroke="#777" stroke-width="1"/>
<path d="M380 220.5h1M383 220.5h1M380 223.5h1M383 223.5h1M380 226.5h1M383 226.5h1M380 229.5h1M383 229.5h1M380 232.5h1M383 232.5h1M380 235.5h1M383 235.5h1M380 238.5h1M383 238.5h1M380 241.5h1M383 241.5h1M380 244.5h1M383 244.5h1M380 247.5h1M383 247.5h1M380 250.5h1M383 250.5h1M380 253.5h1M383 253.5h1M380 256.5h1M383 256.5h1M380 259.5h1M383 259.5h1M380 262.5h1M383 262.5h1M380 265.5h1M383 265.5h1M380 268.5h1M383 268.5h1M380 271.5h1M383 271.5h1M380 274.5h1M383 274.5h1M380 277.5h1M383 277.5h1M380 280.5h1M383 280.5h1" stroke="#fff" stroke-width="1"/>
<defs><radialGradient id="hg" cx="0.35" cy="0.3" r="0.8"><stop offset="0" stop-color="#ffffff"/><stop offset="0.35" stop-color="#ececec"/><stop offset="0.7" stop-color="#b4b4b4"/><stop offset="1" stop-color="#8a8a8a"/></radialGradient></defs>
<path d="M20 9C17.5 8.8 15 9.3 13.6 10.8C12.4 12.2 11.9 13.8 11.6 15.4L11.3 17L10.4 18.8L9.4 20.2L10.2 20.9L10.6 21.4L10.3 22.2L11 22.8L10.6 23.8L11.4 24.6L20 24.8Z" fill="url(#hg)"/>
<path d="M10.8 16.8C11.6 16.3 12.4 16.2 13 16.5C13.6 16.8 14.3 16.6 15.2 16.8" stroke="#151515" stroke-width="1.1" fill="none"/>
<path d="M10.3 21.6L12.2 21.2M11 23.5L12.6 23.3" stroke="#3a3a3a" stroke-width="0.8" fill="none"/>
<path d="M15 18.5C16.5 19 18 19.5 19.8 19.2V24.8H14.5Z" fill="#9a9a9a" opacity="0.45"/>
<path d="M11.5 18.3L14 17.8L12.5 20.5Z" fill="#ffffff" opacity="0.8"/>
<rect x="19.8" y="9" width="2.4" height="16" fill="#f41414"/>
<rect x="22.2" y="10" width="2.8" height="15" fill="#6a5cff"/>
<rect x="45" y="14" width="7" height="7" fill="#03263e" opacity="0.6"/>
<rect x="44" y="13" width="7" height="7" fill="#fff"/>
<text x="513.5" y="23" font-size="18" text-anchor="middle" fill="#fff" stroke="#fff" stroke-width="0.6" font-family='"Liberation Sans", sans-serif'>?</text>
<rect x="538" y="21" width="13" height="2" fill="#fff"/>
<rect x="569.8" y="10.8" width="11.6" height="11.4" fill="none" stroke="#fff" stroke-width="2"/>
<path d="M630.8 10.8L642.2 22.2M642.2 10.8L630.8 22.2" stroke="#fff" stroke-width="2.4"/>
<path d="M15 61.3H21.5L22.6 59L24.5 62.5M28.8 61.5L32.5 57.3L34.8 56L37.5 61.3H43" stroke="#6a0000" stroke-opacity="0.55" stroke-width="2.6" fill="none" stroke-linejoin="round" stroke-linecap="round"/>
<path d="M14.5 60.3H21.2L22.3 58L24.2 61.5M28.5 60.4L32.3 56.2L34.6 55L37.3 60.2H42.6" stroke="#f00000" stroke-width="2.3" fill="none" stroke-linejoin="round" stroke-linecap="round"/>
<path d="M26.8 44.5V69.5" stroke="#30208a" stroke-width="3.4" stroke-linecap="round"/>
<path d="M26.8 44.5V69.5" stroke="#2a3cf0" stroke-width="2.2" stroke-linecap="round"/>
<path d="M26.6 49V50.5M26.6 56.5V58M27.6 61V69" stroke="#ff2020" stroke-width="1"/>
</svg>
</body></html>
